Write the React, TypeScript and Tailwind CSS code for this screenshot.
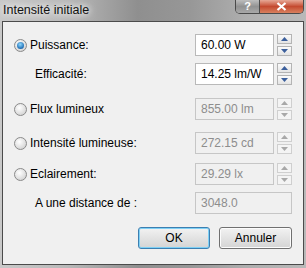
import React from 'react';

type SpinProps = {
    disabled?: boolean;
};

const Arrow = ({ up, disabled }: { up?: boolean; disabled?: boolean }) => (
    <svg width="7" height="4" viewBox="0 0 7 4">
        <path
            d={up ? 'M0 4 L3.5 0 L7 4 Z' : 'M0 0 L3.5 4 L7 0 Z'}
            fill={disabled ? '#a8a8a8' : '#3b5f9c'}
        />
    </svg>
);

const Spin = ({ disabled }: SpinProps) => (
    <div className="flex flex-col justify-between w-[15px] h-[22px]">
        {[true, false].map((up) => (
            <div
                key={up ? 'up' : 'down'}
                className={`flex items-center justify-center h-[10px] border ${
                    disabled
                        ? 'border-[#cfcfcf] bg-[#f4f4f4]'
                        : 'border-[#b4b4b4] bg-linear-to-b from-[#fbfbfb] to-[#e4e4e4]'
                }`}
            >
                <Arrow up={up} disabled={disabled} />
            </div>
        ))}
    </div>
);

type FieldProps = {
    value: string;
    disabled?: boolean;
    spin?: boolean;
};

const Field = ({ value, disabled, spin = true }: FieldProps) => (
    <div className="flex w-[97px] h-[22px] gap-[3px]">
        <div
            className={`flex items-center flex-1 h-full pl-[5px] border text-[12px] ${
                disabled
                    ? 'border-[#c6c6c6] bg-[#f0f0f0] text-[#8d8d8d]'
                    : 'border-[#b9b9b9] bg-white text-black'
            }`}
        >
            {value}
        </div>
        {spin && <Spin disabled={disabled} />}
    </div>
);

const Radio = ({ checked }: { checked?: boolean }) => (
    <div className="flex items-center justify-center w-[13px] h-[13px] rounded-full border border-[#8a8a8a] bg-[radial-gradient(circle_at_40%_35%,#ffffff,#c9c9c9)]">
        {checked && (
            <div className="w-[7px] h-[7px] rounded-full bg-[radial-gradient(circle_at_45%_35%,#8fd8ff,#1f6eb4_70%,#0d3f74)]" />
        )}
    </div>
);

type RowProps = {
    label: string;
    radio?: boolean;
    checked?: boolean;
    className?: string;
    children: React.ReactNode;
};

const Row = ({ label, radio, checked, className, children }: RowProps) => (
    <div className={`flex items-center h-[22px] pl-[11px] pr-[11px] ${className ?? ''}`}>
        <div className="flex items-center flex-1 gap-[3px]">
            {radio ? <Radio checked={checked} /> : <div className="w-[18px]" />}
            <span className="text-[12px] text-black">{label}</span>
        </div>
        {children}
    </div>
);

export default function App() {
    return (
        <div
            className="flex flex-col w-[306px] h-[268px] overflow-hidden bg-[linear-gradient(90deg,#c9c9c9_0%,#b9b9b9_22%,#8f8f8f_45%,#979797_62%,#aeaeae_80%,#b9b9b9_100%)]"
            style={{ fontFamily: '"Liberation Sans", Arial, sans-serif' }}
        >
            <div className="flex items-start h-[21px] shrink-0">
                <span className="pl-[3px] pt-[3px] text-[12.5px] leading-[15px] text-[#111] [text-shadow:0_0_6px_#fff,0_0_10px_#fff]">
                    Intensité initiale
                </span>
                <div className="flex ml-auto mr-[2px] h-[14px] rounded-b-[5px] border border-t-0 border-[#4a4a4a] overflow-hidden">
                    <div className="flex items-center justify-center w-[24px] h-full border-r border-[#4a4a4a] bg-[#9a9a9a] bg-linear-to-b from-[#bdbdbd] via-[#929292] to-[#a8a8a8] text-white text-[11px] font-bold leading-none">
                        ?
                    </div>
                    <div className="flex items-center justify-center w-[43px] h-full bg-[#c8553b] bg-linear-to-b from-[#e6a896] via-[#c44a30] to-[#d8805e]">
                        <svg width="11" height="9" viewBox="0 0 11 9">
                            <path d="M1.5 1 L9.5 8 M9.5 1 L1.5 8" stroke="#fff" strokeWidth="2.2" />
                        </svg>
                    </div>
                </div>
            </div>
            <div className="flex flex-col flex-none h-[244px] mx-[2px] pt-[12px] border border-[#4b4b4b] bg-[#f0f0f0]">
                <Row label="Puissance:" radio checked>
                    <Field value="60.00 W" />
                </Row>
                <Row label="Efficacité:" className="mt-[7px]">
                    <Field value="14.25 lm/W" />
                </Row>
                <Row label="Flux lumineux" radio className="mt-[13px]">
                    <Field value="855.00 lm" disabled />
                </Row>
                <Row label="Intensité lumineuse:" radio className="mt-[12px]">
                    <Field value="272.15 cd" disabled />
                </Row>
                <Row label="Eclairement:" radio className="mt-[9px]">
                    <Field value="29.29 lx" disabled />
                </Row>
                <Row label="A une distance de :" className="mt-[7px]">
                    <Field value="3048.0" disabled spin={false} />
                </Row>
                <div className="flex justify-end gap-[9px] mt-[13px] pr-[11px]">
                    <button className="w-[72px] h-[22px] rounded-[3px] border border-[#3c7fb1] bg-linear-to-b from-[#f2f2f2] to-[#d4d4d4] text-[12px] text-black shadow-[inset_0_0_0_1px_#7fd0f5]">
                        OK
                    </button>
                    <button className="w-[73px] h-[22px] rounded-[3px] border border-[#707070] bg-linear-to-b from-[#f2f2f2] to-[#d4d4d4] text-[12px] text-black shadow-[inset_0_0_0_1px_#fcfcfc]">
                        Annuler
                    </button>
                </div>
            </div>
        </div>
    );
}
